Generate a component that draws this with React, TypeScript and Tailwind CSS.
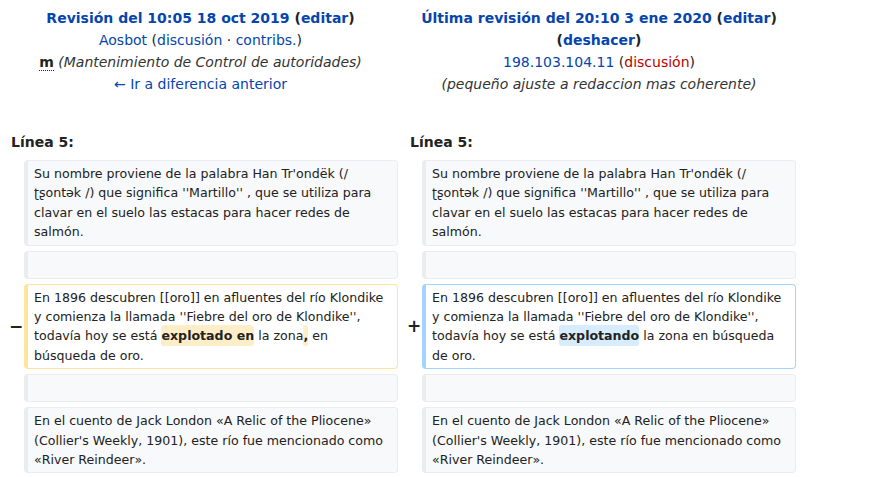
import React from 'react';

const link = 'text-[#0645ad]';

type Kind = 'context' | 'deleted' | 'added' | 'empty';

const Cell = ({ kind, children }: { kind: Kind; children?: React.ReactNode }) => {
  const border =
    kind === 'deleted'
      ? 'border-[#ffe49c] bg-white'
      : kind === 'added'
      ? 'border-[#a3d3ff] bg-white'
      : 'border-[#eaecf0] bg-[#f8f9fa]';
  return (
    <div
      className={`min-h-[28px] rounded-[4px] border border-l-4 pl-[6px] pr-[5px] py-[3px] text-[12.6px] leading-[19.4px] text-[#222] ${border}`}
    >
      {children}
    </div>
  );
};

const Marker = ({ sign }: { sign?: string }) => (
  <div className="flex items-center justify-center pl-[8px] text-[17px] font-bold text-[#222]">{sign}</div>
);

const Del = ({ children }: { children: React.ReactNode }) => (
  <span className="rounded-[3px] bg-[#feeec8] py-[3px] font-bold">{children}</span>
);

const Ins = ({ children }: { children: React.ReactNode }) => (
  <span className="rounded-[3px] bg-[#d8ecff] py-[3px] font-bold">{children}</span>
);

const first = (
  <>Su nombre proviene de la palabra Han Tr'ondëk (/ ʈʂontək /) que significa ''Martillo'' , que se utiliza para clavar en el suelo las estacas para hacer redes de salmón.</>
);

const last = (
  <>En el cuento de Jack London «A Relic of the Pliocene» (Collier's Weekly, 1901), este río fue mencionado como «River Reindeer».</>
);

const App = () => {
  return (
    <div className="h-[477px] w-[874px] overflow-hidden bg-white font-['DejaVu_Sans',sans-serif] text-[#222]">
      <div className="w-[796px]">
        <div className="grid grid-cols-[24px_374px_24px_374px] pt-[7px] text-[14px] leading-[22px]">
          <div className="col-span-2 pl-[3px] text-center">
            <div className="font-bold">
              <span className={link}>Revisión del 10:05 18 oct 2019</span> (<span className={link}>editar</span>)
            </div>
            <div>
              <span className={link}>Aosbot</span> (<span className={link}>discusión</span> · <span className={link}>contribs.</span>)
            </div>
            <div>
              <abbr className="font-bold no-underline border-b border-dotted border-[#222]">m</abbr>{' '}
              <span className="italic text-[#333]">(Mantenimiento de Control de autoridades)</span>
            </div>
            <div className={link}>← Ir a diferencia anterior</div>
          </div>
          <div className="col-span-2 pl-[4px] text-center">
            <div className="font-bold">
              <span className={link}>Última revisión del 20:10 3 ene 2020</span> (<span className={link}>editar</span>)
            </div>
            <div className="font-bold">
              (<span className={link}>deshacer</span>)
            </div>
            <div>
              <span className={link}>198.103.104.11</span> (<span className="text-[#ba0000]">discusión</span>)
            </div>
            <div className="italic text-[#333]">(pequeño ajuste a redaccion mas coherente)</div>
          </div>
        </div>

        <div className="mt-[37px] grid grid-cols-[24px_374px_24px_374px] gap-y-[5px]">
          <div className="col-span-2 pl-[11px] pb-[3px] text-[14px] font-bold leading-[20px]">Línea 5:</div>
          <div className="col-span-2 pl-[12px] pb-[3px] text-[14px] font-bold leading-[20px]">Línea 5:</div>

          <Marker />
          <Cell kind="context">{first}</Cell>
          <Marker />
          <Cell kind="context">{first}</Cell>

          <Marker />
          <Cell kind="empty" />
          <Marker />
          <Cell kind="empty" />

          <Marker sign="−" />
          <Cell kind="deleted">
            En 1896 descubren [[oro]] en afluentes del río Klondike y comienza la llamada ''Fiebre del oro de Klondike'',
            todavía hoy se está <Del>explotado en</Del> la zona<Del>,</Del> en búsqueda de oro.
          </Cell>
          <Marker sign="+" />
          <Cell kind="added">
            En 1896 descubren [[oro]] en afluentes del río Klondike y comienza la llamada ''Fiebre del oro de Klondike'',
            todavía hoy se está <Ins>explotando</Ins> la zona en búsqueda de oro.
          </Cell>

          <Marker />
          <Cell kind="empty" />
          <Marker />
          <Cell kind="empty" />

          <Marker />
          <Cell kind="context">{last}</Cell>
          <Marker />
          <Cell kind="context">{last}</Cell>
        </div>
      </div>
    </div>
  );
};

export default App;
